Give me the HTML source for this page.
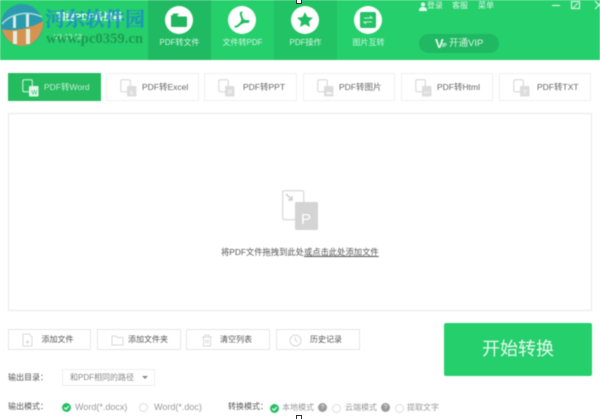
<!DOCTYPE html>
<html lang="zh"><head><meta charset="utf-8"><title>PDF</title>
<style>
*{box-sizing:border-box}
html,body{margin:0;padding:0;width:600px;height:419px;overflow:hidden;background:#fff}
body{position:relative;font-family:"Liberation Sans","Noto Sans CJK SC",sans-serif;color:#555}
#w{position:absolute;left:0;top:0;width:600px;height:419px;filter:blur(.55px)}
.a{position:absolute;white-space:nowrap}
.hdr{left:0;top:0;width:600px;height:60px;background:#25cf6c}
.tab{top:0;width:63px;height:60px}
.circ{position:absolute;left:17px;top:6px;width:28px;height:28px;border-radius:50%;background:#fff}
.tl{position:absolute;left:0;width:100%;top:37px;text-align:center;font-size:8px;line-height:12px;color:#d5f5e2}
.t{top:73px;height:28px;background:#fff;border:1px solid #f0f0f0;font-size:8.5px;line-height:26px;color:#666}
.t span{position:absolute;left:35px;top:0;right:0}
.ic{position:absolute;left:13px;top:5px;width:17px;height:18px}
.b{top:329px;height:21px;border:1px solid #e6e6e6;font-size:8px;line-height:19px;color:#555;text-align:center;padding-left:16px;background:#fff}
.l{font-size:8px;line-height:12px;color:#555}
.g{color:#999}
.rd{width:9px;height:9px;border-radius:50%;border:1px solid #ddd;background:#fff}
.q{width:9px;height:9px;border-radius:50%;background:#999;color:#fff;font-size:6.500px;line-height:9px;text-align:center}
</style></head><body><div id="w">
<div class="a hdr"></div>

<div class="a tab" style="left:148px;background:#20ba62"><div class="circ"></div>
<svg class="a" style="left:22px;top:12px" width="18" height="16" viewBox="0 0 18 16"><path d="M1 4a1 1 0 0 1 1-1h5l1 1.500h8a1 1 0 0 1 1 1V14a1 1 0 0 1-1 1H2a1 1 0 0 1-1-1z" fill="#1fb65f"/><path d="M3 1.500h5l1 1.500H3z" fill="#1fb65f"/></svg>
<div class="tl">PDF转文件</div></div>

<div class="tab a" style="left:211px;background:#25cf6c"><div class="circ"></div>
<svg class="a" style="left:21px;top:10px" width="20" height="20" viewBox="0 0 20 20"><path d="M9.500 2.500c-1 0-1 2 .5 5.500c1 2 0 4-2.500 6.500C6 16 4 17 3.500 16.500M10 8.500c1 2 3 3 6.500 2.500M8 14c2-1.500 5-2.500 8-2" fill="none" stroke="#20bd63" stroke-width="2" stroke-linecap="round"/></svg>
<div class="tl">文件转PDF</div></div>

<div class="tab a" style="left:274px;background:#22c365"><div class="circ"></div>
<svg class="a" style="left:22px;top:11px" width="18" height="18" viewBox="0 0 18 18"><path d="M9 1l2.400 5 5.600.7-4.100 3.800 1.100 5.500L9 13.300 4 16l1.100-5.500L1 6.700 6.600 6z" fill="#20bd63"/></svg>
<div class="tl">PDF操作</div></div>

<div class="tab a" style="left:337px"><div class="circ"></div>
<div class="a" style="left:23px;top:12px;width:16px;height:16px;border-radius:2px;background:#22c265"></div>
<svg class="a" style="left:25px;top:15px" width="12" height="10" viewBox="0 0 12 10"><path d="M2 3h8L8 1M10 7H2l2 2" fill="none" stroke="#cdf3dc" stroke-width="1"/></svg>
<div class="tl">图片互转</div></div>

<svg class="a" style="left:0;top:4px" width="46" height="42" viewBox="0 0 46 42"><circle cx="22" cy="21" r="21" fill="#2b9aae"/><path d="M2 25c10 3 28 0 41-8 1 12-8 25-21 25C12 42 4 34 2 25z" fill="#d4934e"/><path d="M13 27h4v13h-4zM26 25h4v15h-4z" fill="#e4efe4"/><path d="M13 12h3v12h-3zM26 9h3v14h-3z" fill="#d5eee8"/><path d="M2 20c8-10 26-14 40-7" fill="none" stroke="#a8dcd6" stroke-width="1.500"/></svg>

<div class="a" style="left:56px;top:11px;font-size:9.500px;line-height:14px;font-weight:700;color:#f0fbf5">围捷PDF转换器</div>
<div class="a" style="left:54px;top:33px;font-size:7px;line-height:10px;color:#cdeedb">V1.10.13</div>
<div class="a" style="left:45px;top:3px;font-family:'Noto Serif CJK SC',serif;font-size:20px;line-height:30px;font-weight:700;color:#1a8fc2;opacity:.85;-webkit-text-stroke:.3px #1a8fc2">河东软件园</div>
<div class="a" style="left:46px;top:31px;font-family:'Liberation Serif',serif;font-size:14.700px;line-height:16px;font-weight:700;color:#1f9a50">www.pc0359.cn</div>

<svg class="a" style="left:419px;top:2px" width="8" height="9" viewBox="0 0 8 9"><circle cx="4" cy="2.500" r="2" fill="#e8faf0"/><path d="M0 9c0-3 1.500-4 4-4s4 1 4 4z" fill="#e8faf0"/></svg>
<div class="a" style="left:427px;top:0;font-size:8px;line-height:12px;color:#dff7e9">登录</div>
<div class="a" style="left:452px;top:0;font-size:8px;line-height:12px;color:#dff7e9">客服</div>
<div class="a" style="left:478px;top:0;font-size:8px;line-height:12px;color:#dff7e9">菜单</div>
<svg class="a" style="left:550px;top:0" width="50" height="12" viewBox="0 0 50 12"><path d="M2 5.500h8" stroke="#d5f5e2" stroke-width="1.200"/><rect x="21.500" y="1.500" width="8" height="7" fill="none" stroke="#d5f5e2" stroke-width="1.200"/><path d="M23 8l5-5" stroke="#d5f5e2"/><path d="M45 1l8 8M53 1l-8 8" stroke="#d5f5e2" stroke-width="1.200"/></svg>

<div class="a" style="left:419px;top:34px;width:80px;height:19px;border-radius:10px;background:#20b862"></div>
<div class="a" style="left:435px;top:35px;font-size:13px;line-height:17px;font-weight:700;color:#e8faf0">V</div>
<div class="a" style="left:442px;top:42px;font-size:5px;line-height:8px;font-weight:700;color:#e8faf0">IP</div>
<div class="a" style="left:449px;top:35px;font-size:9.500px;line-height:17px;color:#d9f6e5">开通VIP</div>

<div class="a t" style="left:8px;width:93px;background:#25bb5f;border-color:#25bb5f;color:#c6efd6"><svg class="ic" viewBox="0 0 17 18"><rect x=".8" y=".8" width="9.500" height="12" rx="1.500" fill="none" stroke="#e3f7eb"/><rect x="7" y="7" width="9.500" height="10.500" rx="1" fill="#e3f7eb"/><text x="9.300" y="15.500" font-size="6.500" fill="#25bb5f" font-family="Liberation Sans">W</text></svg><span>PDF转Word</span></div>
<div class="a t" style="left:106px;width:93px"><svg class="ic" viewBox="0 0 17 18"><rect x=".8" y=".8" width="9.500" height="12" rx="1.500" fill="none" stroke="#d4d4d4"/><rect x="7" y="7" width="9.500" height="10.500" rx="1" fill="#dcdcdc"/><text x="10" y="15.500" font-size="6.500" fill="#fff" font-family="Liberation Sans">x</text></svg><span>PDF转Excel</span></div>
<div class="a t" style="left:204px;width:93px"><svg class="ic" viewBox="0 0 17 18"><rect x=".8" y=".8" width="9.500" height="12" rx="1.500" fill="none" stroke="#d4d4d4"/><rect x="7" y="7" width="9.500" height="10.500" rx="1" fill="#dcdcdc"/><text x="10" y="15.500" font-size="6.500" fill="#fff" font-family="Liberation Sans">P</text></svg><span style="left:38px">PDF转PPT</span></div>
<div class="a t" style="left:303px;width:92px"><svg class="ic" viewBox="0 0 17 18"><rect x=".8" y=".8" width="9.500" height="12" rx="1.500" fill="none" stroke="#d4d4d4"/><rect x="7" y="7" width="9.500" height="10.500" rx="1" fill="#dcdcdc"/><path d="M9 15l2-2.500 2 1.500 1.500-1 1 2z" fill="#fff"/></svg><span>PDF转图片</span></div>
<div class="a t" style="left:401px;width:92px"><svg class="ic" viewBox="0 0 17 18"><rect x=".8" y=".8" width="9.500" height="12" rx="1.500" fill="none" stroke="#d4d4d4"/><rect x="7" y="7" width="9.500" height="10.500" rx="1" fill="#dcdcdc"/><text x="8.500" y="15" font-size="4.500" fill="#fff" font-family="Liberation Sans">&lt;/&gt;</text></svg><span>PDF转Html</span></div>
<div class="a t" style="left:499px;width:92px"><svg class="ic" viewBox="0 0 17 18"><rect x=".8" y=".8" width="9.500" height="12" rx="1.500" fill="none" stroke="#d4d4d4"/><rect x="7" y="7" width="9.500" height="10.500" rx="1" fill="#dcdcdc"/><text x="10" y="15.500" font-size="6.500" fill="#fff" font-family="Liberation Sans">T</text></svg><span style="left:37px">PDF转TXT</span></div>

<div class="a" style="left:8px;top:113px;width:584px;height:198px;border:1px solid #e8e8e8;background:#fff"></div>
<svg class="a" style="left:281px;top:189px" width="38" height="43" viewBox="0 0 38 43"><rect x="1.700" y="1.700" width="21" height="29" rx="1.500" fill="#fff" stroke="#dcdcdc" stroke-width="1.400"/><path d="M5 5l6 6M11 7v4H7" fill="none" stroke="#c8c8c8" stroke-width="1.300"/><rect x="14" y="13" width="23" height="28" rx="1.500" fill="#d4d4d4"/><text x="20" y="35" font-size="15" fill="#fff" font-family="Liberation Sans">P</text></svg>
<div class="a" style="left:221px;top:246px;font-size:8.300px;line-height:12px;color:#555">将PDF文件拖拽到此处<span style="text-decoration:underline">或点击此处添加文件</span></div>

<div class="a b" style="left:8px;width:83px">添加文件</div>
<svg class="a" style="left:22px;top:333px" width="11" height="14" viewBox="0 0 11 14"><path d="M1 1h6l3 3v9H1z M5.500 7v4M3.500 9h4" fill="none" stroke="#d8d8d8"/></svg>
<div class="a b" style="left:97px;width:84px;padding-left:18px">添加文件夹</div>
<svg class="a" style="left:111px;top:335px" width="13" height="11" viewBox="0 0 13 11"><path d="M1 1h4l1 1.500h6V10H1z" fill="none" stroke="#d8d8d8"/></svg>
<div class="a b" style="left:186px;width:84px">清空列表</div>
<svg class="a" style="left:201px;top:334px" width="12" height="13" viewBox="0 0 12 13"><path d="M1 3h10M4 3V1h4v2M2.500 3v9h7V3M5 5.500v4M7 5.500v4" fill="none" stroke="#d8d8d8"/></svg>
<div class="a b" style="left:276px;width:84px">历史记录</div>
<svg class="a" style="left:289px;top:334px" width="13" height="13" viewBox="0 0 13 13"><circle cx="6.500" cy="6.500" r="5.500" fill="none" stroke="#d8d8d8"/><path d="M6.500 3v3.500l2 1.500" fill="none" stroke="#d8d8d8"/></svg>

<div class="a" style="left:444px;top:323px;width:148px;height:53px;border-radius:2px;background:#25cf6c;color:#e8faf0;font-size:18px;line-height:53px;text-align:center">开始转换</div>

<div class="a l" style="left:8px;top:372px">输出目录：</div>
<div class="a" style="left:62px;top:369px;width:93px;height:17px;border:1px solid #eee;font-size:8px;line-height:15px;padding-left:7px;color:#888">和PDF相同的路径</div>
<div class="a" style="left:142px;top:376px;border-left:3px solid transparent;border-right:3px solid transparent;border-top:3px solid #888"></div>

<div class="a l" style="left:8px;top:401px">输出模式：</div>
<svg class="a" style="left:62px;top:403px" width="9" height="9" viewBox="0 0 8 8"><circle cx="4" cy="4" r="4" fill="#25bf64"/><path d="M2 4l1.500 1.500L6 2.800" fill="none" stroke="#fff"/></svg>
<div class="a l g" style="left:75px;top:401px;font-size:9px">Word(*.docx)</div>
<div class="a rd" style="left:139px;top:403px"></div>
<div class="a l g" style="left:154px;top:401px;font-size:9px">Word(*.doc)</div>
<div class="a l" style="left:228px;top:401px">转换模式：</div>
<svg class="a" style="left:270px;top:404px" width="9" height="9" viewBox="0 0 8 8"><circle cx="4" cy="4" r="4" fill="#25bf64"/><path d="M2 4l1.500 1.500L6 2.800" fill="none" stroke="#fff"/></svg>
<div class="a g" style="left:282px;top:402px;font-size:8px;line-height:11px">本地模式</div>
<div class="a q" style="left:318px;top:403px">?</div>
<div class="a rd" style="left:332px;top:404px"></div>
<div class="a g" style="left:345px;top:402px;font-size:8px;line-height:11px">云端模式</div>
<div class="a q" style="left:381px;top:403px">?</div>
<div class="a rd" style="left:395px;top:404px"></div>
<div class="a g" style="left:407px;top:402px;font-size:8px;line-height:11px">提取文字</div>
</div>
<div class="a" style="left:296px;top:0;width:6px;height:4px;background:#fff;border:1px solid #333;border-top:0"></div>
<div class="a" style="left:296px;top:415px;width:6px;height:4px;background:#fff;border:1px solid #333;border-bottom:0"></div>
</body></html>
